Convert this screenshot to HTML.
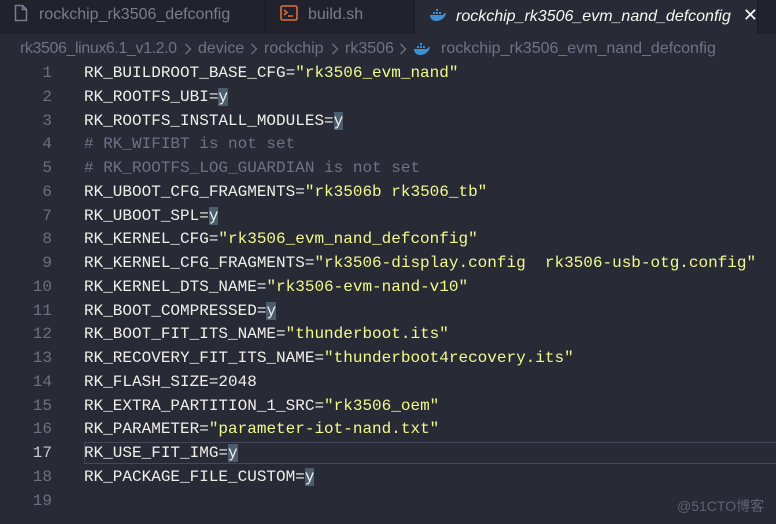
<!DOCTYPE html><html><head><meta charset="utf-8"><style>
body{margin:0;width:776px;height:524px;background:#282a36;overflow:hidden;position:relative;font-family:"Liberation Sans",sans-serif}
.tabs{position:absolute;left:0;top:0;width:776px;height:34px;background:#21222c}
.tab{position:absolute;top:0;height:34px;font-size:16px;line-height:30px;color:#7a7d8f}
.sep{position:absolute;top:0;width:1px;height:34px;background:#191a21}
.bc{position:absolute;top:38px;font-size:16px;color:#6f7285;white-space:nowrap;line-height:22px}
.ch{position:absolute;top:43px}
.code{position:absolute;top:62px;left:0;font-family:"Liberation Mono",monospace;font-size:16px}
.l{height:23.78px;line-height:23.78px;white-space:pre;position:relative}
.n{display:inline-block;width:52px;text-align:right;color:#6d7080}
.t{position:absolute;left:84px;color:#f0f0ea}
.s{color:#f1fa8c}.c{color:#6f7285}.y{background:#4b5d6e}
.cur{position:absolute;left:84px;top:442px;width:692px;height:22px;border:1px solid #44475a;border-right:none;box-sizing:border-box}
</style></head><body>
<div class="tabs">
<div class="tab" style="left:14px"><svg width="14" height="18" viewBox="0 0 14 18" style="vertical-align:-3px"><path d="M1.5 1.5h7l4 4v11h-11z M8.5 1.5v4h4" fill="none" stroke="#7a7d8f" stroke-width="1.5"/></svg><span style="margin-left:11px">rockchip_rk3506_defconfig</span></div>
<div class="sep" style="left:265px"></div>
<div class="tab" style="left:280px"><svg width="18" height="16" viewBox="0 0 18 16" style="vertical-align:-2px"><rect x="1" y="1" width="16" height="14" rx="1.5" fill="none" stroke="#e06c3c" stroke-width="1.6"/><path d="M4 5l3 2.5-3 2.5M8 11h5" fill="none" stroke="#e06c3c" stroke-width="1.5"/></svg><span style="margin-left:10px">build.sh</span></div>
<div class="sep" style="left:414px"></div>
<div style="position:absolute;left:415px;top:0;width:342px;height:34px;background:#282a36"></div>
<div class="tab" style="left:430px;color:#f8f8f2;font-style:italic"><svg width="16" height="12" viewBox="0 0 16 12" style="vertical-align:0"><path d="M0 6h13c1-2 2-2 3-2-1 5-5 8-10 8C2 12 0 9 0 6zM3 3h2v2H3zM6 3h2v2H6zM9 3h2v2H9zM6 0h2v2H6z" fill="#3d8fd6"/></svg><span style="margin-left:10px">rockchip_rk3506_evm_nand_defconfig</span><span style="font-style:normal;margin-left:12px;font-size:18px">✕</span></div>
<div class="sep" style="left:757px"></div>
</div>
<div class="bc" style="left:20px;letter-spacing:-0.4px">rk3506_linux6.1_v1.2.0</div>
<svg class="ch" width="8" height="12" style="left:184px"><path d="M1.5 1l5 5-5 5" fill="none" stroke="#6f7285" stroke-width="1.3"/></svg>
<div class="bc" style="left:198px">device</div>
<svg class="ch" width="8" height="12" style="left:250px"><path d="M1.5 1l5 5-5 5" fill="none" stroke="#6f7285" stroke-width="1.3"/></svg>
<div class="bc" style="left:264px">rockchip</div>
<svg class="ch" width="8" height="12" style="left:331px"><path d="M1.5 1l5 5-5 5" fill="none" stroke="#6f7285" stroke-width="1.3"/></svg>
<div class="bc" style="left:345px">rk3506</div>
<svg class="ch" width="8" height="12" style="left:399px"><path d="M1.5 1l5 5-5 5" fill="none" stroke="#6f7285" stroke-width="1.3"/></svg>
<svg style="position:absolute;left:414px;top:43px" width="16" height="12" viewBox="0 0 16 12"><path d="M0 6h13c1-2 2-2 3-2-1 5-5 8-10 8C2 12 0 9 0 6zM3 3h2v2H3zM6 3h2v2H6zM9 3h2v2H9zM6 0h2v2H6z" fill="#3d8fd6"/></svg>
<div class="bc" style="left:441px">rockchip_rk3506_evm_nand_defconfig</div>
<div class="cur"></div>
<div class="code">
<div class="l"><span class="n">1</span><span class="t">RK_BUILDROOT_BASE_CFG=<span class="s">"rk3506_evm_nand"</span></span></div>
<div class="l"><span class="n">2</span><span class="t">RK_ROOTFS_UBI=<span class="y">y</span></span></div>
<div class="l"><span class="n">3</span><span class="t">RK_ROOTFS_INSTALL_MODULES=<span class="y">y</span></span></div>
<div class="l"><span class="n">4</span><span class="t c"># RK_WIFIBT is not set</span></div>
<div class="l"><span class="n">5</span><span class="t c"># RK_ROOTFS_LOG_GUARDIAN is not set</span></div>
<div class="l"><span class="n">6</span><span class="t">RK_UBOOT_CFG_FRAGMENTS=<span class="s">"rk3506b rk3506_tb"</span></span></div>
<div class="l"><span class="n">7</span><span class="t">RK_UBOOT_SPL=<span class="y">y</span></span></div>
<div class="l"><span class="n">8</span><span class="t">RK_KERNEL_CFG=<span class="s">"rk3506_evm_nand_defconfig"</span></span></div>
<div class="l"><span class="n">9</span><span class="t">RK_KERNEL_CFG_FRAGMENTS=<span class="s">"rk3506-display.config  rk3506-usb-otg.config"</span></span></div>
<div class="l"><span class="n">10</span><span class="t">RK_KERNEL_DTS_NAME=<span class="s">"rk3506-evm-nand-v10"</span></span></div>
<div class="l"><span class="n">11</span><span class="t">RK_BOOT_COMPRESSED=<span class="y">y</span></span></div>
<div class="l"><span class="n">12</span><span class="t">RK_BOOT_FIT_ITS_NAME=<span class="s">"thunderboot.its"</span></span></div>
<div class="l"><span class="n">13</span><span class="t">RK_RECOVERY_FIT_ITS_NAME=<span class="s">"thunderboot4recovery.its"</span></span></div>
<div class="l"><span class="n">14</span><span class="t">RK_FLASH_SIZE=2048</span></div>
<div class="l"><span class="n">15</span><span class="t">RK_EXTRA_PARTITION_1_SRC=<span class="s">"rk3506_oem"</span></span></div>
<div class="l"><span class="n">16</span><span class="t">RK_PARAMETER=<span class="s">"parameter-iot-nand.txt"</span></span></div>
<div class="l"><span class="n" style="color:#c8c9d0">17</span><span class="t">RK_USE_FIT_IMG=<span class="y">y</span></span></div>
<div class="l"><span class="n">18</span><span class="t">RK_PACKAGE_FILE_CUSTOM=<span class="y">y</span></span></div>
<div class="l"><span class="n">19</span></div>
</div>
<div style="position:absolute;left:677px;top:496px;font-size:14px;color:#5f6273;font-family:'Liberation Sans','Noto Sans CJK SC',sans-serif">@51CTO博客</div>
</body></html>
